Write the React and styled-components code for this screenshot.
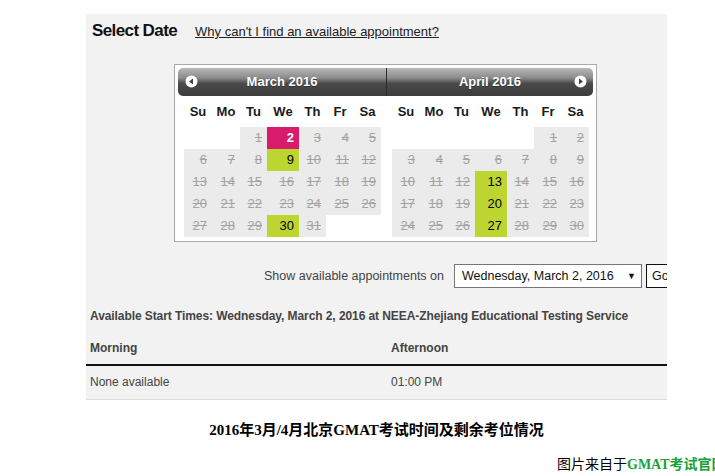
import styled, { createGlobalStyle } from "styled-components";

const GlobalStyle = createGlobalStyle`
  html, body {
    margin: 0;
    padding: 0;
    background: #fff;
    overflow: hidden;
  }
  body {
    font-family: "Liberation Sans", Arial, sans-serif;
    color: #222;
  }
`;

// column widths of the jQuery-ui style datepicker table (We is wider)
const COLS = "28px 28px 27px 32px 27px 28px 27px";
const DAY_NAMES = ["Su", "Mo", "Tu", "We", "Th", "Fr", "Sa"];

const march = {
  title: "March 2016",
  offset: 2,
  days: 31,
  available: [9, 30],
  selected: 2,
};
const april = {
  title: "April 2016",
  offset: 5,
  days: 30,
  available: [13, 20, 27],
  selected: null,
};

const buildWeeks = (m) => {
  const cells = [];
  for (let i = 0; i < m.offset; i++) cells.push(null);
  for (let d = 1; d <= m.days; d++) cells.push(d);
  while (cells.length % 7) cells.push(null);
  return cells;
};

const Arrow = ({ dir }) => (
  <svg width="13" height="13" viewBox="0 0 13 13">
    <circle cx="6.5" cy="6.5" r="6" fill="#fff" />
    {dir === "prev" ? (
      <path d="M4 6.5 L8 3.5 L8 9.5 Z" fill="#444" />
    ) : (
      <path d="M9 6.5 L5 3.5 L5 9.5 Z" fill="#444" />
    )}
  </svg>
);

const Month = ({ month, side }) => {
  const cells = buildWeeks(month);
  return (
    <MonthCol $side={side}>
      <MonthHeader $side={side}>
        {side === "left" && (
          <NavIcon $side="left">
            <Arrow dir="prev" />
          </NavIcon>
        )}
        {month.title}
        {side === "right" && (
          <NavIcon $side="right">
            <Arrow dir="next" />
          </NavIcon>
        )}
      </MonthHeader>
      <DayGrid>
        {DAY_NAMES.map((n) => (
          <DayName key={n}>{n}</DayName>
        ))}
        {cells.map((d, i) => {
          if (d === null) return <EmptyCell key={i} />;
          if (d === month.selected)
            return (
              <DayCell key={i} $state="selected">
                {d}
              </DayCell>
            );
          if (month.available.includes(d))
            return (
              <DayCell key={i} $state="open">
                {d}
              </DayCell>
            );
          return (
            <DayCell key={i} $state="off">
              {d}
            </DayCell>
          );
        })}
      </DayGrid>
    </MonthCol>
  );
};

export default function App() {
  return (
    <>
      <GlobalStyle />
      <Page>
        <Panel>
          <TitleRow>
            <Title>Select Date</Title>
            <HelpLink href="#">Why can't I find an available appointment?</HelpLink>
          </TitleRow>

          <Calendar>
            <Month month={march} side="left" />
            <Month month={april} side="right" />
          </Calendar>

          <ShowRow>
            <ShowLabel>Show available appointments on</ShowLabel>
            <DateSelect>
              <span>Wednesday, March 2, 2016</span>
              <Caret>▼</Caret>
            </DateSelect>
            <GoButton>Go</GoButton>
          </ShowRow>

          <StartTitle>
            Available Start Times: Wednesday, March 2, 2016 at NEEA-Zhejiang
            Educational Testing Service
          </StartTitle>

          <TimesTable>
            <HeadCell>Morning</HeadCell>
            <HeadCell>Afternoon</HeadCell>
            <BodyCell>None available</BodyCell>
            <BodyCell>01:00 PM</BodyCell>
          </TimesTable>
        </Panel>

        <Caption>2016年3月/4月北京GMAT考试时间及剩余考位情况</Caption>
        <Source>
          图片来自于<SourceSite>GMAT考试官网</SourceSite>
        </Source>
      </Page>
    </>
  );
}

const Page = styled.div`
  padding: 14px 0 0 86px;
  width: 629px;
  height: 462px;
`;

const Panel = styled.div`
  width: 581px;
  background: #f2f2f2;
  overflow: hidden;
  border-bottom: 1px solid #dedede;
`;

const TitleRow = styled.div`
  display: flex;
  align-items: baseline;
  gap: 18px;
  padding: 7px 6px 0;
  height: 30px;
`;

const Title = styled.h2`
  margin: 0;
  font-size: 17px;
  font-weight: bold;
  letter-spacing: -0.6px;
  color: #111;
`;

const HelpLink = styled.a`
  font-size: 13px;
  color: #222;
  text-decoration: underline;
`;

const Calendar = styled.div`
  display: flex;
  width: 415px;
  margin: 13px 0 0 88px;
  padding: 3px 3px 4px;
  background: #fff;
  border: 1px solid #a9a9a9;
`;

const MonthCol = styled.div`
  width: ${(p) => (p.$side === "left" ? "208px" : "207px")};
`;

const MonthHeader = styled.div`
  position: relative;
  height: 28px;
  line-height: 28px;
  text-align: center;
  color: #fff;
  font-size: 13px;
  font-weight: bold;
  background: linear-gradient(#b8b8b8 0%, #8c8c8c 35%, #4a4a4a 55%, #3c3c3c 100%);
  border-radius: ${(p) => (p.$side === "left" ? "5px 0 0 5px" : "0 5px 5px 0")};
  border-left: ${(p) => (p.$side === "right" ? "1px solid #2a2a2a" : "none")};
  text-shadow: 0 1px 0 #333;
`;

const NavIcon = styled.span`
  position: absolute;
  top: 7px;
  ${(p) => (p.$side === "left" ? "left: 7px;" : "right: 6px;")}
  display: flex;
`;

const DayGrid = styled.div`
  display: grid;
  grid-template-columns: ${COLS};
  grid-template-rows: 31px;
  grid-auto-rows: 22px;
  margin-left: 6px;
  width: 197px;
`;

const DayName = styled.div`
  line-height: 31px;
  text-align: center;
  font-size: 13px;
  font-weight: bold;
  color: #1a1a1a;
`;

const EmptyCell = styled.div`
  background: #fff;
`;

const DayCell = styled.div`
  line-height: 22px;
  text-align: right;
  padding-right: 5px;
  font-size: 13px;
  background: ${(p) =>
    p.$state === "selected" ? "#d91b6e" : p.$state === "open" ? "#bdd530" : "#ebebeb"};
  color: ${(p) =>
    p.$state === "selected" ? "#fff" : p.$state === "open" ? "#000" : "#a3a3a3"};
  font-weight: ${(p) => (p.$state === "selected" ? "bold" : "normal")};
  text-decoration: ${(p) => (p.$state === "off" ? "line-through" : "none")};
`;

const ShowRow = styled.div`
  display: flex;
  align-items: center;
  height: 24px;
  margin: 22px 0 0 178px;
  white-space: nowrap;
`;

const ShowLabel = styled.span`
  font-size: 12.5px;
  color: #444;
  margin-right: 10px;
`;

const DateSelect = styled.div`
  flex-shrink: 0;
  box-sizing: border-box;
  width: 188px;
  height: 24px;
  display: flex;
  align-items: center;
  justify-content: space-between;
  padding: 0 5px 0 7px;
  background: #fff;
  border: 1px solid #767676;
  font-size: 12.5px;
  color: #111;
`;

const Caret = styled.span`
  font-size: 9px;
  color: #111;
`;

const GoButton = styled.div`
  flex-shrink: 0;
  box-sizing: border-box;
  margin-left: 4px;
  height: 24px;
  padding: 0 5px;
  line-height: 22px;
  border: 1px solid #111;
  background: #fff;
  font-size: 12.5px;
  color: #111;
`;

const StartTitle = styled.div`
  margin-top: 21px;
  padding-left: 4px;
  line-height: 14px;
  font-size: 12px;
  font-weight: bold;
  letter-spacing: -0.08px;
  color: #444;
  white-space: nowrap;
`;

const TimesTable = styled.div`
  display: grid;
  grid-template-columns: 301px 1fr;
  margin-top: 9px;
`;

const HeadCell = styled.div`
  padding: 0 4px;
  height: 32px;
  line-height: 32px;
  font-size: 12px;
  font-weight: bold;
  color: #444;
  border-bottom: 2px solid #111;
`;

const BodyCell = styled.div`
  padding: 0 4px;
  height: 33px;
  line-height: 33px;
  font-size: 12px;
  color: #444;
`;

const Caption = styled.div`
  width: 581px;
  margin-top: 18px;
  text-align: center;
  font-family: "Liberation Serif", "Noto Sans CJK SC", serif;
  font-size: 15px;
  font-weight: bold;
  color: #000;
`;

const Source = styled.div`
  margin: 15px 0 0 471px;
  white-space: nowrap;
  line-height: 18px;
  font-family: "Noto Sans CJK SC", sans-serif;
  font-size: 14px;
  color: #000;
`;

const SourceSite = styled.span`
  font-family: "Liberation Serif", "Noto Sans CJK SC", serif;
  font-weight: bold;
  color: #17a03c;
`;
